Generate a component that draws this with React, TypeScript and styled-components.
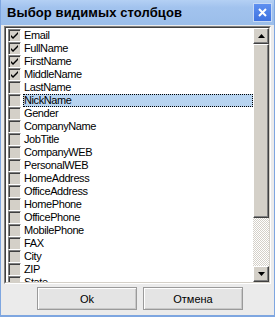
import styled, { createGlobalStyle } from "styled-components";

const Global = createGlobalStyle`
  html, body { margin: 0; padding: 0; }
  body { font-family: "Liberation Sans", Arial, sans-serif; background: #ebebeb; }
`;

const Window = styled.div`
  width: 275px;
  height: 317px;
  box-sizing: border-box;
  border: 1px solid #7ea6e0;
  border-top: none;
  border-bottom: 2px solid #7ea6e0;
  background: #ebebeb;
  display: flex;
  flex-direction: column;
`;

const TitleBar = styled.div`
  height: 25px;
  flex: none;
  display: flex;
  align-items: center;
  justify-content: space-between;
  padding: 0 2px 0 6px;
  background: linear-gradient(#b4d0f4 0%, #a2c3ee 30%, #9bbeea 100%);
`;

const Title = styled.span`
  font-weight: bold;
  font-size: 13px;
  letter-spacing: 0.1px;
  color: #000;
`;

const CloseButton = styled.div`
  width: 19px;
  height: 19px;
  box-sizing: border-box;
  border: 1px solid #c6d9f5;
  background: linear-gradient(#5d8ff0, #3f73e0);
  display: flex;
  align-items: center;
  justify-content: center;
`;

const Body = styled.div`
  flex: 1;
  display: flex;
  flex-direction: column;
  padding: 1px 3px 0 3px;
`;

const ListBox = styled.div`
  height: 258px;
  box-sizing: border-box;
  border: 1px solid;
  border-color: #808080 #ffffff #ffffff #808080;
  display: flex;
`;

const ListInner = styled.div`
  flex: 1;
  border: 1px solid;
  border-color: #404040 #d4d0c8 #d4d0c8 #404040;
  background: #fff;
  display: flex;
  overflow: hidden;
`;

const Items = styled.div`
  flex: 1;
  padding: 1px 0 0 2px;
  overflow: hidden;
`;

const Row = styled.div`
  height: 13px;
  display: flex;
  align-items: center;
  gap: 2px;
  font-size: 11px;
  line-height: 13px;
  color: #000;
`;

const Label = styled.span<{ $selected?: boolean }>`
  flex: 1;
  height: 13px;
  box-sizing: border-box;
  padding-left: 1px;
  background: ${(p) => (p.$selected ? "#b8d4f0" : "transparent")};
  outline: ${(p) => (p.$selected ? "1px dotted #000" : "none")};
  outline-offset: -1px;
  letter-spacing: -0.4px;
`;

const Check = styled.div`
  width: 13px;
  height: 13px;
  flex: none;
  box-sizing: border-box;
  border: 1px solid;
  border-color: #808080 #ffffff #ffffff #808080;
  background: #d4d0c8;
  box-shadow: inset 1px 1px 0 #404040;
  display: flex;
  align-items: center;
  justify-content: center;
`;

const ScrollBar = styled.div`
  width: 16px;
  flex: none;
  display: flex;
  flex-direction: column;
`;

const ScrollButton = styled.div`
  height: 16px;
  flex: none;
  box-sizing: border-box;
  background: #d4d0c8;
  border: 1px solid;
  border-color: #ffffff #404040 #404040 #ffffff;
  box-shadow: inset -1px -1px 0 #808080;
  display: flex;
  align-items: center;
  justify-content: center;
`;

const Thumb = styled.div`
  height: 174px;
  flex: none;
  box-sizing: border-box;
  background: #d4d0c8;
  border: 1px solid;
  border-color: #ffffff #404040 #404040 #ffffff;
  box-shadow: inset -1px -1px 0 #808080;
`;

const Track = styled.div`
  flex: 1;
  background-color: #ffffff;
  background-image: repeating-conic-gradient(#d4d0c8 0% 25%, #ffffff 0% 50%);
  background-size: 2px 2px;
`;

const Buttons = styled.div`
  display: flex;
  gap: 6px;
  padding-top: 3px;
  padding-left: 33px;
`;

const Button = styled.div`
  width: 100px;
  height: 23px;
  box-sizing: border-box;
  border: 1px solid #9a9a9a;
  box-shadow: inset 1px 1px 0 #ffffff, inset -1px -1px 0 #c8c8c8;
  background: #e4e4e4;
  display: flex;
  align-items: center;
  justify-content: center;
  font-size: 11px;
  color: #000;
`;

const items = [
  "Email",
  "FullName",
  "FirstName",
  "MiddleName",
  "LastName",
  "NickName",
  "Gender",
  "CompanyName",
  "JobTitle",
  "CompanyWEB",
  "PersonalWEB",
  "HomeAddress",
  "OfficeAddress",
  "HomePhone",
  "OfficePhone",
  "MobilePhone",
  "FAX",
  "City",
  "ZIP",
  "State",
];
const checked = ["Email", "FullName", "FirstName", "MiddleName"];

const Tick = () => (
  <svg width="9" height="9" viewBox="0 0 9 9">
    <path d="M1 4 L3 6 L8 1 L8 3 L3 8 L1 6 Z" fill="#000" />
  </svg>
);

export default function App() {
  return (
    <>
      <Global />
      <Window>
        <TitleBar>
          <Title>Выбор видимых столбцов</Title>
          <CloseButton>
            <svg width="9" height="9" viewBox="0 0 9 9">
              <path d="M1 1 L8 8 M8 1 L1 8" stroke="#fff" strokeWidth="2" />
            </svg>
          </CloseButton>
        </TitleBar>
        <Body>
          <ListBox>
            <ListInner>
              <Items>
                {items.map((it) => (
                  <Row key={it}>
                    <Check>{checked.includes(it) && <Tick />}</Check>
                    <Label $selected={it === "NickName"}>{it}</Label>
                  </Row>
                ))}
              </Items>
              <ScrollBar>
                <ScrollButton>
                  <svg width="7" height="4" viewBox="0 0 7 4">
                    <path d="M3.5 0 L7 4 L0 4 Z" fill="#000" />
                  </svg>
                </ScrollButton>
                <Thumb />
                <Track />
                <ScrollButton>
                  <svg width="7" height="4" viewBox="0 0 7 4">
                    <path d="M0 0 L7 0 L3.5 4 Z" fill="#000" />
                  </svg>
                </ScrollButton>
              </ScrollBar>
            </ListInner>
          </ListBox>
          <Buttons>
            <Button>Ok</Button>
            <Button>Отмена</Button>
          </Buttons>
        </Body>
      </Window>
    </>
  );
}
